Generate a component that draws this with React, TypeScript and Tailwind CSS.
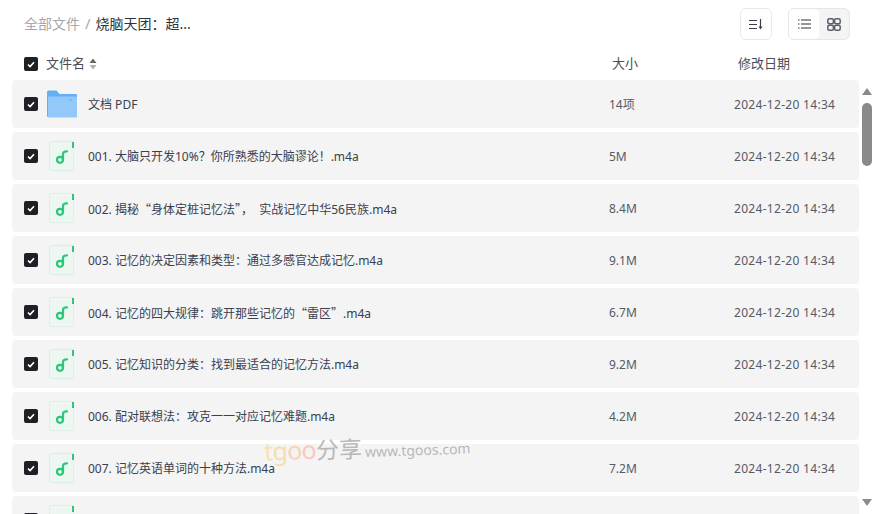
import type { ReactNode } from "react";

const Q = ({ c }: { c: string }) => <span style={{ fontFamily: '"Noto Sans CJK SC", sans-serif' }}>{c}</span>;
const files: [ReactNode, string][] = [
  ["001. 大脑只开发10%？你所熟悉的大脑谬论！.m4a", "5M"],
  [<>002. 揭秘<Q c="“" />身体定桩记忆法<Q c="”" />，{"\u00a0 "}实战记忆中华56民族.m4a</>, "8.4M"],
  ["003. 记忆的决定因素和类型：通过多感官达成记忆.m4a", "9.1M"],
  [<>004. 记忆的四大规律：跳开那些记忆的<Q c="“" />雷区<Q c="”" />.m4a</>, "6.7M"],
  ["005. 记忆知识的分类：找到最适合的记忆方法.m4a", "9.2M"],
  ["006. 配对联想法：攻克一一对应记忆难题.m4a", "4.2M"],
  ["007. 记忆英语单词的十种方法.m4a", "7.2M"],
];
const font = { fontFamily: '"Noto Sans", "Noto Sans CJK SC", sans-serif' };

function Check() {
  return (
    <span className="flex h-[14px] w-[14px] shrink-0 items-center justify-center rounded-[2px] bg-[#1f2026]">
      <svg width="8" height="7" viewBox="0 0 8 7" fill="none">
        <path d="M1 3.500 3.100 5.600 7 1.200" stroke="#fff" strokeWidth="1.600" />
      </svg>
    </span>
  );
}
function Music() {
  return (
    <svg width="27" height="32" viewBox="0 0 27 32" className="ml-[2px] shrink-0">
      <path d="M.5 2.500a1 1 0 0 1 1-1h23v28a1 1 0 0 1-1 1h-22a1 1 0 0 1-1-1z" fill="#edf7f1" stroke="#ddeee4" />
      <rect x="23" y="2" width="2" height="6" fill="#2fc67a" />
      <path d="M18 11.300c-2.500 0-4 .7-4 2.500v6" fill="none" stroke="#2fc67a" strokeWidth="2.200" strokeLinecap="round" />
      <circle cx="11" cy="19.800" r="3" fill="none" stroke="#2fc67a" strokeWidth="2.200" />
    </svg>
  );
}
function Folder() {
  return (
    <svg width="30" height="28" viewBox="0 0 30 28" className="shrink-0">
      <path d="M0 2a1.500 1.500 0 0 1 1.500-1.500h8l3 3.500H29a1 1 0 0 1 1 1v21a1 1 0 0 1-1 1H1a1 1 0 0 1-1-1z" fill="#64aef4" />
      <path d="M1 6.500h28a1 1 0 0 1 1 1V26.500a1 1 0 0 1-1 1H2a1 1 0 0 1-1-1z" fill="#93c8fa" />
      <rect x="22" y="9" width="3" height="2" fill="#7fb9f1" />
    </svg>
  );
}
function Row({ icon, name, size, date = "2024-12-20 14:34" }: { icon: ReactNode; name: ReactNode; size: string; date?: string }) {
  return (
    <div className="flex h-12 shrink-0 items-center rounded-[4px] bg-[#f4f4f4] pl-3 text-[12px] text-[#3a404f]">
      <Check />
      <span className="ml-[9px] flex w-[30px] shrink-0 items-center">{icon}</span>
      <span className="ml-[11px] w-[521px] translate-y-px truncate">{name}</span>
      <span className="w-[125px] translate-y-px text-[#555a66]">{size}</span>
      <span className="translate-y-px whitespace-nowrap tracking-[0.3px] text-[#555a66]">{date}</span>
    </div>
  );
}

export default function App() {
  return (
    <div className="relative flex h-[514px] w-[874px] flex-col overflow-hidden bg-white" style={font}>
      <div className="flex h-[48px] shrink-0 items-center justify-between pl-6 pr-6">
        <div className="flex -translate-y-px items-center gap-[5px] text-[14px]">
          <span className="text-[#a5a7ac]">全部文件</span>
          <span className="text-[15px] text-[#a5a7ac]">/</span>
          <span className="text-[#2d3340]">烧脑天团：超...</span>
        </div>
        <div className="flex items-center gap-4">
          <div className="flex h-8 w-8 items-center justify-center rounded-[6px] border border-[#e9e9e9]">
            <svg width="14" height="11" viewBox="0 0 14 11" fill="none" stroke="#3a3e48" strokeWidth="1.200">
              <path d="M0 1.500h8M0 5.500h8M0 9.500h8" />
              <path d="M11.500 0v9" />
              <path d="M9.500 7.500h4l-2 3z" fill="#3a3e48" stroke="none" />
            </svg>
          </div>
          <div className="flex h-8 w-[62px] rounded-[6px] border border-[#e6e6e6] bg-[#f4f4f4]">
            <div className="flex w-[30px] items-center justify-center rounded-[5px] bg-white">
              <svg width="13" height="10" viewBox="0 0 13 10" fill="none" stroke="#2d3038" strokeWidth="1.100">
                <path d="M3 1h10M3 5h10M3 9h10M0 1h1.500M0 5h1.500M0 9h1.500" />
              </svg>
            </div>
            <div className="flex flex-1 items-center justify-center">
              <svg width="14" height="13" viewBox="0 0 14 13" fill="none" stroke="#5a5e68" strokeWidth="1.500">
                <rect x="0.800" y="0.800" width="5.600" height="4.900" rx="1.500" />
                <rect x="7.600" y="0.800" width="5.600" height="4.900" rx="1.500" />
                <rect x="0.800" y="7.300" width="5.600" height="4.900" rx="1.500" />
                <rect x="7.600" y="7.300" width="5.600" height="4.900" rx="1.500" />
              </svg>
            </div>
          </div>
        </div>
      </div>
      <div className="flex h-8 shrink-0 items-center pl-6 text-[13px] text-[#4a4e5a]">
        <Check />
        <span className="ml-2 flex w-[566px] items-center gap-1">
          文件名
          <svg width="8" height="12" viewBox="0 0 8 12">
            <path d="M4 .5 7.500 5H.5z" fill="#666" />
            <path d="M4 11.500 .5 7h7z" fill="#b0b0b0" />
          </svg>
        </span>
        <span className="w-[126px]">大小</span>
        <span>修改日期</span>
      </div>
      <div className="flex min-h-0 flex-1">
        <div className="ml-3 flex w-[847px] flex-col gap-1 overflow-hidden">
          <Row icon={<Folder />} name="文档 PDF" size="14项" />
          {files.map(([n, s]) => (
            <Row key={s} icon={<Music />} name={n} size={s} />
          ))}
          <Row icon={<Music />} name="" size="" date="" />
        </div>
        <div className="ml-[3px] flex w-[10px] flex-col items-center">
          <svg width="10" height="7" viewBox="0 0 10 7" className="mt-2"><path d="M5 0 10 7H0z" fill="#8a8a8a" /></svg>
          <div className="mt-2 h-[63px] w-[10px] rounded-[5px] bg-[#8a8a8a]" />
          <svg width="10" height="7" viewBox="0 0 10 7" className="mb-2 mt-auto"><path d="M5 7 0 0h10z" fill="#8a8a8a" /></svg>
        </div>
      </div>
      <div className="pointer-events-none absolute left-[264px] top-[429px] flex -rotate-2 items-baseline whitespace-nowrap">
        <span className="text-[25px] tracking-[-0.7px]">
          <span className="text-[#f6e2b0]">t</span>
          <span className="text-[#f8dcae]">g</span>
          <span className="text-[#f9d3b4]">o</span>
          <span className="text-[#f9c8bc]">o</span>
        </span>
        <span className="text-[23px] text-[#b8b8b8]">分享</span>
        <span className="ml-[3px] text-[14px] text-[#b8b8b8]">www.tgoos.com</span>
      </div>
    </div>
  );
}
